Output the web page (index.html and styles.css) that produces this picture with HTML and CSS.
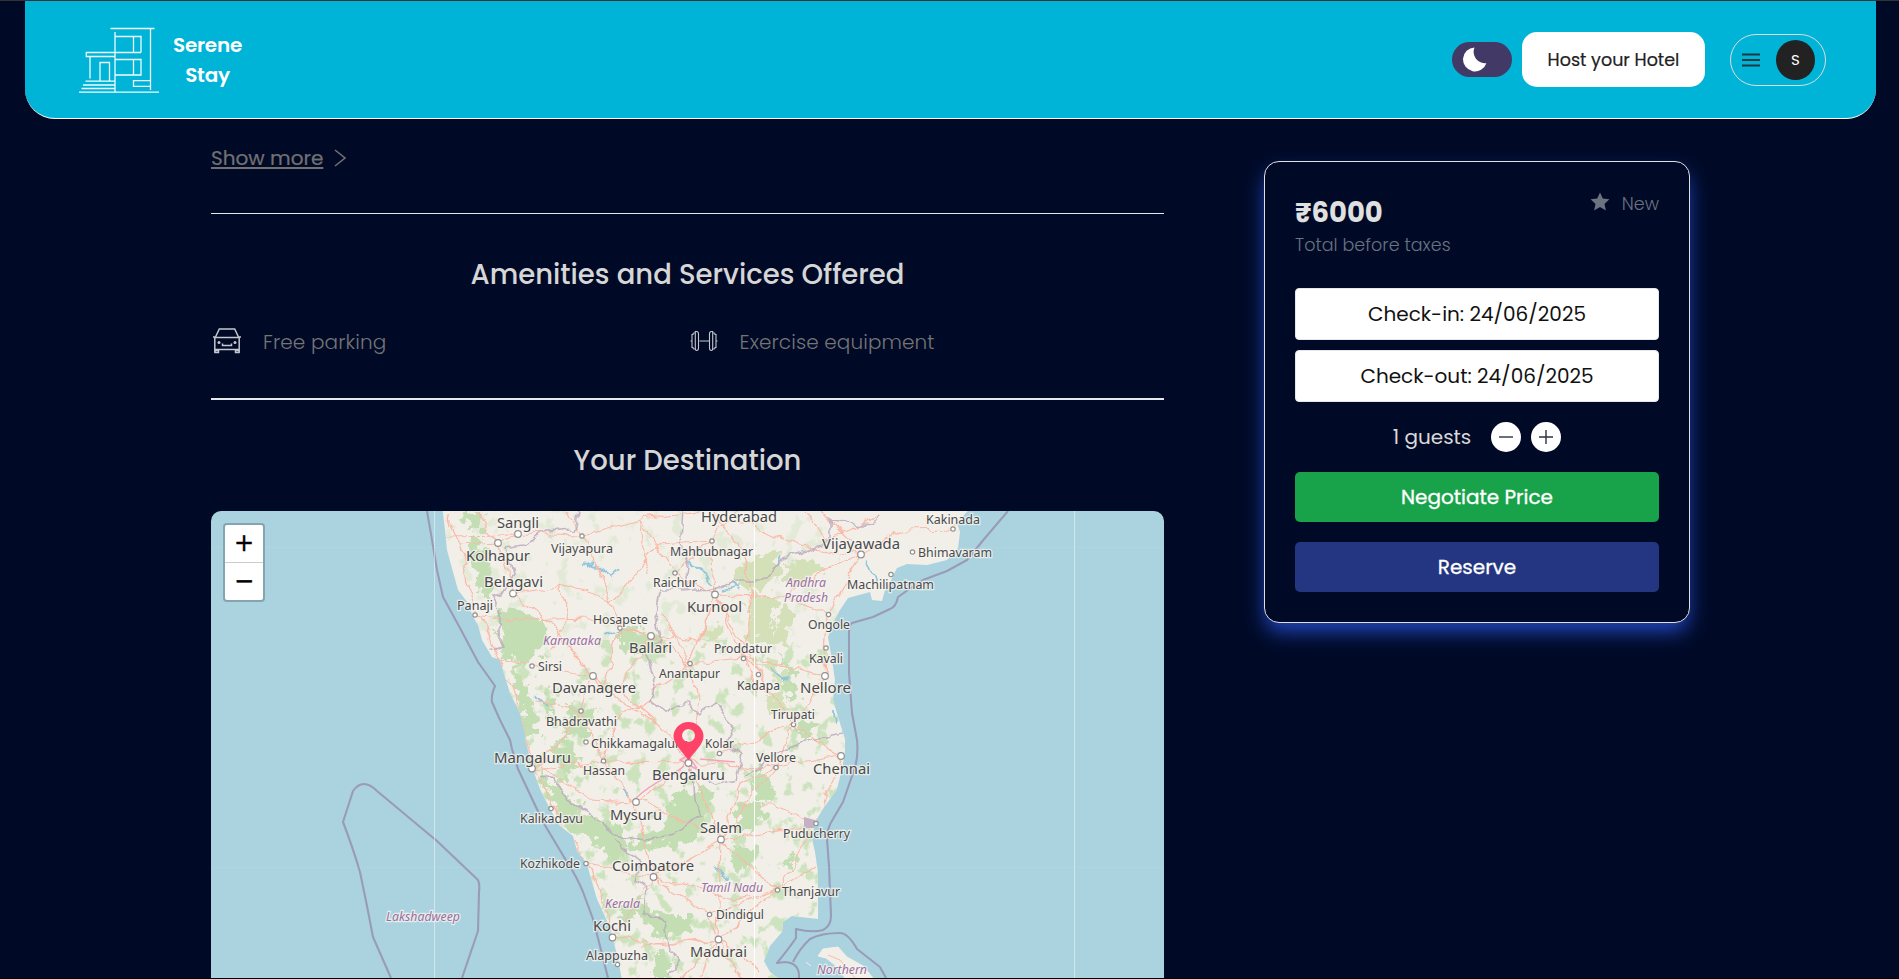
FILE: index.html
```html
<!DOCTYPE html>
<html lang="en">
<head>
<meta charset="utf-8">
<title>Serene Stay</title>
<link rel="stylesheet" href="styles.css">
</head>
<body>
<header class="header">
  <div class="brand">
    <svg class="brand-logo" width="82" height="68" viewBox="78 26 82 68">
      <path d="M110.500 28.500H154.500M115 32V92M150.500 28.500V90M115 36.500H141V52.500M133.500 36.500V52.500M115 59.500H141V75H115M133.500 59.500V75M150 80.700H133.500V86.300H150M141 52.500H86.300V56.500H115M90 56.500V78.500M100 81V62.500H109.500V81M85.500 81.200H115M83 85H115M81.500 88.500H115M79 92.200H159"/>
    </svg>
    <div class="brand-name"><span>Serene</span><span class="brand-second">Stay</span></div>
  </div>
  <div class="actions">
    <div class="toggle"><svg width="24" height="25" viewBox="0 0 24 25"><path d="M11.500 0.400A12 12 0 1 0 23.400 16.200A11.500 11.500 0 0 1 11.500 0.400Z"/></svg></div>
    <button class="host">Host your Hotel</button>
    <div class="account">
      <svg width="18" height="14" viewBox="0 0 18 14"><path d="M0 1.500H18M0 7H18M0 12.500H18"/></svg>
      <span class="avatar">S</span>
    </div>
  </div>
</header>
<main class="main">
  <section class="details">
    <div class="more"><a>Show more</a><svg width="13" height="18" viewBox="0 0 13 18"><path d="M1 1L11 9L1 17"/></svg></div>
    <hr class="rule">
    <h2 class="title title-amenities">Amenities and Services Offered</h2>
    <div class="amenities">
      <div class="amenity">
        <svg width="32" height="32" viewBox="0 0 32 32"><path class="car" d="M4.500 12L8.300 4H23.700L27.500 12M3.800 12.500H28.200V27.500M3.800 12.500V27.500M2 12H5M27 12H30M4 24.500H28M4 25.500H7.500V27.500H4ZM24.500 25.500H28V27.500H24.500ZM11.500 18.500V20.500H20.500V18.500"/><circle cx="8" cy="17.500" r="1.500"/><circle cx="24" cy="17.500" r="1.500"/></svg>
        <span class="amenity-name">Free parking</span>
      </div>
      <div class="amenity">
        <svg width="32" height="32" viewBox="0 0 32 32"><path class="bell" d="M11.500 16H21M2.500 16H4M28 16H29.500M7.300 8H5.800Q5 8 5 9.500H4V22.500H5Q5 24 5.800 24H7.300M7.300 6.500H8.500Q10.500 6.500 10.500 9V23Q10.500 25.500 8.500 25.500Q7.300 25.500 7.300 23ZM24.700 8H26.200Q27 8 27 9.500H28V22.500H27Q27 24 26.200 24H24.700M24.700 6.500H23.500Q21.500 6.500 21.500 9V23Q21.500 25.500 23.500 25.500Q24.700 25.500 24.700 23Z"/></svg>
        <span class="amenity-name">Exercise equipment</span>
      </div>
    </div>
    <hr class="rule rule-thick">
    <h2 class="title title-destination">Your Destination</h2>
    <div class="map">
      <svg class="map-svg" id="map" width="953" height="467" viewBox="211 511 953 467">
        <defs>
          <clipPath id="landclip"><path d="M442 505L445 530 447 550 453 572 458 590 468 603 473 617 478 625 482 640 492 657 500 660 505 677 510 693 520 713 525 733 526 742 532 767 540 789 550 809 560 826 573 836 577 851 587 864 592 882 597 899 607 921 613 939 618 959 623 985H787L770 972 764 961 770 946 782 932 783 922 792 916 818 919V872L815 852 812 839 815 822 823 809 837 789 842 769 845 752V739L839 720 833 700 835 680 832 660 828 637 833 623 840 610 848 598 870 592 872 600 882 601 885 590 890 582 897 568 907 564 927 565 947 560 958 548 960 532 957 523 973 505Z"/></clipPath>
          <filter id="rough" x="-10%" y="-10%" width="120%" height="120%"><feTurbulence type="fractalNoise" baseFrequency="0.09" numOctaves="4" seed="7"/><feDisplacementMap in="SourceGraphic" scale="26" xChannelSelector="R" yChannelSelector="G"/></filter>
          <filter id="wobble" x="-10%" y="-10%" width="120%" height="120%"><feTurbulence type="fractalNoise" baseFrequency="0.05" numOctaves="3" seed="3"/><feDisplacementMap in="SourceGraphic" scale="13" xChannelSelector="R" yChannelSelector="G"/></filter>
          <filter id="specks" x="0" y="0" width="100%" height="100%" color-interpolation-filters="sRGB"><feTurbulence type="fractalNoise" baseFrequency="0.07 0.06" numOctaves="4" seed="12"/><feColorMatrix values="0 0 0 0 .8  0 0 0 0 .89  0 0 0 0 .74  9 0 0 0 -5.200"/></filter>
        </defs>
        <rect x="211" y="511" width="953" height="467" fill="#aad3df"/>
        <g clip-path="url(#landclip)">
          <rect x="430" y="505" width="560" height="480" fill="#f2efe9"/>
          <rect x="500" y="640" width="350" height="340" filter="url(#specks)"/>
          <rect x="440" y="505" width="400" height="135" filter="url(#specks)" opacity=".4"/>
          <g fill="#c3deb2" filter="url(#rough)">
            <path d="M463 512H480L482 530 468 528ZM472 535L490 550 492 600 480 590 470 560ZM495 607L515 608 545 625 550 645 525 665 502 655 500 630ZM515 660L528 690 540 735 528 735 516 700ZM547 745L570 740 580 770 565 780ZM540 770L562 790 585 815 620 825 632 850 615 860 590 840 568 830 548 795ZM667 800L700 785 712 800 698 835 684 845 630 848 640 835 665 825ZM620 630L645 632 665 645 640 655 620 645ZM545 690L558 700 550 725ZM570 705L595 710 590 735 560 735ZM620 905L645 900 660 915 695 915 690 930 660 940 640 920 622 918ZM655 950L672 960 672 978 655 978ZM752 770L775 775 772 790 765 805 752 800ZM735 808L760 805 765 825 750 832 735 825ZM785 855L795 858 788 870 780 865ZM730 850L755 845 758 865 735 870ZM781 655L795 675 798 700 790 705ZM800 715L815 725 812 735 797 735Z"/>
          </g>
          <g fill="#d4e0b8" filter="url(#rough)">
            <path d="M735 575L755 555 780 550 778 580 755 588 738 583ZM785 565L815 560 822 570 795 585 785 583ZM748 592L775 595 775 640 760 645 748 635ZM782 600L794 602 790 625 784 650 774 640ZM700 632L725 625 720 640 702 642ZM757 660L775 665 790 685 775 680ZM765 692L785 695 788 715 770 710Z"/>
          </g>
          <g fill="none" stroke="#8fc6dc" stroke-width="1.800" filter="url(#wobble)">
            <path d="M580 563L596 565M586 566L592 560M596 566L610 576 622 570M690 562L705 575 712 585M722 590L738 586M730 582L740 590M620 628L607 634M780 555L776 565M868 559L878 585M535 695L545 705M622 788L630 795M770 668L785 680M715 868L728 880M835 710L836 725M612 940L616 955"/>
          </g>
          <g fill="none" stroke="#fbb9a8" stroke-width="1.200" filter="url(#wobble)">
            <path d="M448 515L460 545 468 580 476 605 495 650 512 690 527 740 534 768 555 810 586 862 600 890 612 935 620 975M518 534L498 543 513 593 550 625 593 676 620 700 660 725 688 760M442 535L518 534 582 536 640 520 700 512M582 536L612 600 620 628 651 636 690 663 743 658 825 676M651 636L700 640 715 594 712 541 735 512M715 594L690 663 700 700 688 760M593 676L581 711 603 761 636 802 653 877 612 937M532 768L603 761 688 762 776 767 841 756M688 762L721 840 718 939 700 978M721 840L653 877 586 864M721 840L777 890 718 939 640 945M841 756L816 823 777 890M816 823L721 840M841 756L793 724 758 674 715 594M793 724L825 676 828 614 861 554 900 530 953 529 968 512M861 554L820 512M861 554L800 545 735 520M582 536L570 512M513 593L560 585 612 600M475 615L513 620 593 618 651 636M620 628L602 690 593 676M532 666L593 676M532 666L500 660M636 802L590 800 540 765M636 802L667 780 690 762M653 877L709 914 777 890M709 914L718 939 760 970M612 937L665 945 718 939M675 573L640 520M675 573L712 541M675 573L715 594M743 658L758 674 793 724 776 767 721 840M743 658L715 594 780 597 828 614M780 597L861 554M560 585L570 620 550 650M776 767L740 785 721 840M816 823L770 805 740 805M777 890L815 865M777 890L735 900 653 877M719 753L760 740 793 724M603 761L615 720 651 700M660 725L620 690 651 636M460 545L498 543 480 515M710 512L740 545 755 590 743 658 757 690M805 512L825 540 850 530 880 512M640 520L650 575M718 939L680 978M718 939L740 978M581 711L560 745 532 768M532 700L581 711M640 800L700 830M660 610L690 663 650 690M712 541L660 545 612 600"/>
          </g>
          <g fill="none" stroke="#b9a6bb" stroke-width="1.600" opacity=".8" filter="url(#wobble)">
            <path d="M580 512L575 530 545 532 525 545 505 548 512 575 500 595 490 597 500 610 500 645 490 650M683 512L680 545 690 565 688 590 660 590 655 610 663 640 645 650 655 680 650 700 665 710 685 700 700 715 715 705 733 725 725 745 742 755 735 780 715 785 690 770 692 800 700 815 680 830 645 840 615 835 590 815 570 800 555 780 540 775M680 592L715 590 735 580 765 580 780 560 830 540 830 520 870 525 880 512M615 840L620 850 640 860 635 880 648 890 645 915 665 920 670 950 680 960 668 978M745 775L780 750 810 740 845 735"/>
          </g>
          <path d="M804 817L815 820 815 828 804 828Z" fill="#c5b1c4"/>
          <path d="M636 798C655 780 674 775 684 766M700 759L735 762M680 760L688 755 698 770Z" fill="none" stroke="#f5a3bd" stroke-width="1.500"/>
        </g>
        <path d="M818 956L823 949 838 947 847 957 863 966 873 978H845L835 965 826 958ZM806 962L811 966" fill="#f2efe9" stroke="#f2efe9"/>
        <path d="M828 955L840 960 855 978" fill="none" stroke="#fbb9a8"/>
        <g fill="none" stroke="#9a9bb8" stroke-width="2.100" stroke-linejoin="round">
          <path d="M427 511L432 540 437 570 443 597 460 628 478 662 495 686 Q491 695 492 702L500 720 510 740 512 749 518 769 543 822 567 862Q577 877 583 892L593 919 600 946 608 978"/>
          <path d="M1008 511L985 538 967 560 947 571 923 580 908 590 898 597 Q896 607 890 609L873 617 852 623Q849 625 849 633V673L852 713 857 740Q859 760 852 776L843 802 833 819Q827 828 827 839L829 866 831 916Q831 926 823 930 Q812 933 796 929V938Q790 947 777 963L785 962 Q800 963 799 978M793 962Q800 948 810 939 821 933 840 933 848 933 857 949L880 967 886 978"/>
          <path d="M391 978L373 937 367 906 360 872Q353 848 343 822L353 791Q358 784 364 784T377 791L407 816 437 841 478 880Q480 884 479 892L478 931 462 978"/>
        </g>
        <g stroke="#fff" fill="none"><path d="M434.500 511V978M1074.500 511V978" opacity=".45"/><path d="M754.500 511V978"/><path d="M211 547.500H1164M211 867.500H1164" opacity=".06"/></g>
        <g id="dots" fill="#fff" stroke="#929290" stroke-width="1.200"></g>
        <g id="labels"></g>
        <path fill="#ff4267" fill-rule="evenodd" d="M688.500 760.500C682 751 673.500 744 673.500 736.500A15 14.500 0 0 1 703.500 736.500C703.500 744 695 751 688.500 760.500ZM688.500 729A6.500 6.500 0 1 0 688.500 742A6.500 6.500 0 1 0 688.500 729Z"/>
      </svg>
      <div class="zoom"><span>+</span><span>−</span></div>
    </div>
  </section>
  <aside class="card">
    <div class="card-head">
      <div><div class="price">₹6000</div><div class="taxes">Total before taxes</div></div>
      <div class="rating"><svg width="20" height="19" viewBox="0 0 20 19"><path d="M10 .5L12.800 6.600 19.400 7.300 14.500 11.900 15.900 18.400 10 15.100 4.100 18.400 5.500 11.900 .6 7.300 7.200 6.600Z"/></svg><span>New</span></div>
    </div>
    <div class="date">Check-in: 24/06/2025</div>
    <div class="date">Check-out: 24/06/2025</div>
    <div class="guests"><span class="count">1 guests</span>
      <span class="step"><svg width="16" height="16"><path d="M1 8H15"/></svg></span>
      <span class="step"><svg width="16" height="16"><path d="M1 8H15M8 1V15"/></svg></span>
    </div>
    <button class="btn negotiate">Negotiate Price</button>
    <button class="btn reserve">Reserve</button>
  </aside>
</main>
<script src="map.js"></script>
</body>
</html>
```

FILE: styles.css
```css
* { box-sizing: border-box; }
body { margin: 0; height: 979px; overflow: hidden; background: #000a27; border-top: 1px solid #333; border-bottom: 1px solid #000; font-family: Poppins, Inter, "Noto Sans", sans-serif; }
button { font-family: inherit; border: 0; padding: 0; }
.header { height: 118px; margin: 0 23px 0 25px; padding: 0 50px 0 53px; background: #00b4d8; border-bottom: 1px solid #fff; border-radius: 0 0 30px 30px; display: flex; justify-content: space-between; }
.brand { display: flex; align-items: flex-start; padding-top: 25px; gap: 12px; }
.brand-logo path { fill: none; stroke: #fff; stroke-width: 1.300; opacity: .95; }
.brand-name { display: flex; flex-direction: column; align-items: center; width: 71px; padding-top: 4px; color: #fff; font-size: 20px; line-height: 30px; font-weight: 600; letter-spacing: -.25px; }
.actions { display: flex; align-items: flex-start; }
.toggle { width: 60px; height: 35px; margin: 41px 10px 0 0; padding: 5px 0 0 11px; border-radius: 18px; background: #423966; }
.toggle path { fill: #fff; }
.host { width: 183px; height: 55px; margin: 31px 25px 0 0; border-radius: 15px; background: #fff; color: #222; font-size: 17.5px; font-weight: 400; -webkit-text-stroke: .2px #222; }
.account { width: 96px; height: 52px; margin-top: 33px; border: 1px solid #dcdcdc; border-radius: 26px; display: flex; align-items: center; justify-content: space-between; padding: 0 10px 0 11px; }
.account path { stroke: #1c3940; stroke-width: 2; }
.avatar { width: 39px; height: 40px; border-radius: 50%; background: #222; color: #fff; font-size: 15px; font-weight: 400; line-height: 40px; text-align: center; }
.main { display: flex; align-items: flex-start; padding-left: 211px; gap: 100px; }
.details { width: 953px; }
.more { height: 94px; padding-top: 24px; display: flex; gap: 11px; color: #717171; font-size: 20px; line-height: 30px; -webkit-text-stroke: .2px #717171; }
.more a { text-decoration: underline; text-underline-offset: 2px; text-decoration-thickness: 2px; }
.more svg { margin-top: 6px; }
.more path { fill: none; stroke: #717171; stroke-width: 1.600; }
.rule { margin: 0; border: 0; height: 1px; background: #e5e7eb; }
.rule-thick { height: 2px; }
.title { margin: 0; text-align: center; color: #d6d6d6; font-size: 27.5px; font-weight: 500; line-height: 42px; }
.title-amenities { margin-top: 40px; }
.title-destination { margin-top: 40px; }
.amenities { display: grid; grid-template-columns: 1fr 1fr; margin: 28px 0 40px; height: 34px; }
.amenity { display: flex; align-items: center; gap: 20px; color: #757575; font-size: 20px; font-weight: 300; letter-spacing: .1px; }
.amenity-name { padding-top: 1px; }
.amenity svg { fill: #c4c7cd; }
.amenity path { fill: none; stroke: #c4c7cd; stroke-width: 1.500; }
.amenity .bell { stroke-width: 1.100; }
.map { position: relative; height: 467px; margin-top: 29px; overflow: hidden; border-radius: 10px 10px 0 0; }
.map-svg { display: block; }
.town { font-family: "Noto Sans", sans-serif; fill: #4a4a4a; stroke: #f7f5f1; stroke-width: 2.500px; stroke-opacity: .75; paint-order: stroke; }
.town-big { font-size: 15px; }
.town-small { font-size: 12.500px; }
.state { font-size: 12.500px; font-style: italic; fill: #9a70a0; }
.zoom { position: absolute; left: 12px; top: 12px; width: 42px; height: 79px; border: 2px solid rgba(0,0,0,.22); border-radius: 4px; background: #fff; background-clip: padding-box; font: 500 24px/37px "DejaVu Sans", sans-serif; text-align: center; color: #000; -webkit-text-stroke: .4px #000; }
.zoom span { display: block; height: 37px; }
.zoom span:first-child { height: 38px; border-bottom: 1px solid #ccc; }
.card { width: 426px; height: 462px; margin-top: 42px; padding: 30px; border: 1px solid #e0e0e0; border-radius: 15px; box-shadow: 0 10px 20px -2px #2249c4; background: #000a27; }
.card-head { display: flex; justify-content: space-between; height: 96px; }
.price { color: #e0e0e0; font-size: 27.5px; font-weight: 700; line-height: 42px; }
.taxes { margin-top: -1px; color: #6b7280; font-size: 17.5px; font-weight: 300; line-height: 25px; letter-spacing: .05px; }
.rating { display: flex; gap: 12px; color: #6b7280; font-size: 17.5px; line-height: 24px; font-weight: 300; }
.rating path { fill: #6b7280; }
.date { height: 52px; margin-bottom: 10px; border: 1px solid #e5e7eb; border-radius: 4px; background: #fff; color: #111; font-size: 20px; line-height: 50px; text-align: center; }
.guests { display: flex; align-items: center; justify-content: center; height: 30px; margin: 20px 0; color: #d9d9d9; font-size: 20px; }
.step { width: 30px; height: 30px; margin-left: 10px; border-radius: 50%; background: #fff; display: flex; align-items: center; justify-content: center; }
.count { margin-right: 10px; }
.step path { stroke: #2c3140; stroke-width: 1.400; }
.btn { display: block; width: 100%; height: 50px; border-radius: 5px; color: #fff; font-size: 20px; font-weight: 400; -webkit-text-stroke: .3px #fff; }
.negotiate { background: #18a34a; margin-bottom: 20px; }
.reserve { background: #243682; }
```

FILE: map.js
```js
// name, left, right, baseline, dot x, dot y
var cities = [
  ["Sangli",497,539,528,518,534],["Kolhapur",466,530,561,498,543],["Belagavi",484,543,587,513,593.5],
  ["Ballari",629,672,653,651,636],["Davanagere",552,636,693,593,676],["Hyderabad",701,777,522],
  ["Vijayawada",822,900,549,861,554.5],["Kurnool",687,742,612,715,594.5],["Nellore",800,851,693,825,676],
  ["Mangaluru",494,571,763,532,768.5],["Bengaluru",652,725,780,688.5,763],["Chennai",813,870,774,841,756],
  ["Mysuru",610,662,820,636,802],["Salem",700,742,833,721,839.5],["Coimbatore",612,694,871,653.5,877],
  ["Kochi",593,631,931,612.5,937.5],["Madurai",690,747,957,718.5,939.5]
];
var towns = [
  ["Panaji",457,493,610,475,615],["Vijayapura",551,613,553,582,536],["Hosapete",593,648,624,620,628],
  ["Sirsi",538,562,671,532,666],["Bhadravathi",546,617,726,581,711],["Mahbubnagar",670,753,556,712,541],
  ["Kakinada",926,980,524,953,529],["Bhimavaram",918,992,557,912.5,552],["Machilipatnam",847,934,589,891,574.5],
  ["Raichur",653,697,587,675,573],["Ongole",808,850,629,828.5,614.5],["Proddatur",714,772,653,743.5,658.5],
  ["Kavali",809,843,663,826,648],["Anantapur",659,720,678,690,663.5],["Kadapa",737,780,690,758.5,674.5],
  ["Tirupati",771,815,719,793.5,724.5],["Chikkamagaluru",591,688,748,586,742],["Kolar",705,734,748,719.5,753.5],
  ["Hassan",583,625,775,603.5,761],["Vellore",756,796,762,776,767.5],["Kalikadavu",520,583,823,551,808.5],
  ["Puducherry",783,850,838,816,823.5],["Kozhikode",520,580,868,586,863.5],["Thanjavur",782,840,896,777.5,890],
  ["Dindigul",716,764,919,709.5,914.5],["Alappuzha",586,648,960,617.5,964.5]
];
var states = [
  ["Karnataka",543,601,645],["Andhra",786,826,587],["Pradesh",784,828,602],["Kerala",605,640,908],
  ["Tamil Nadu",701,763,892],["Lakshadweep",386,460,921],["Northern",817,867,974]
];
function add(parent, tag, attrs, text) {
  var el = document.createElementNS("http://www.w3.org/2000/svg", tag);
  for (var k in attrs) el.setAttribute(k, attrs[k]);
  if (text) el.textContent = text;
  document.getElementById(parent).appendChild(el);
}
function draw(list, cls, r) {
  list.forEach(function (p) {
    if (p[4]) add("dots", "circle", { cx: p[4], cy: p[5], r: r });
    add("labels", "text", { x: p[1], y: p[3], textLength: p[2] - p[1], lengthAdjust: "spacingAndGlyphs", "class": "town " + cls }, p[0]);
  });
}
draw(towns, "town-small", 2.2);
draw(cities, "town-big", 3.3);
draw(states, "state", 0);
```
